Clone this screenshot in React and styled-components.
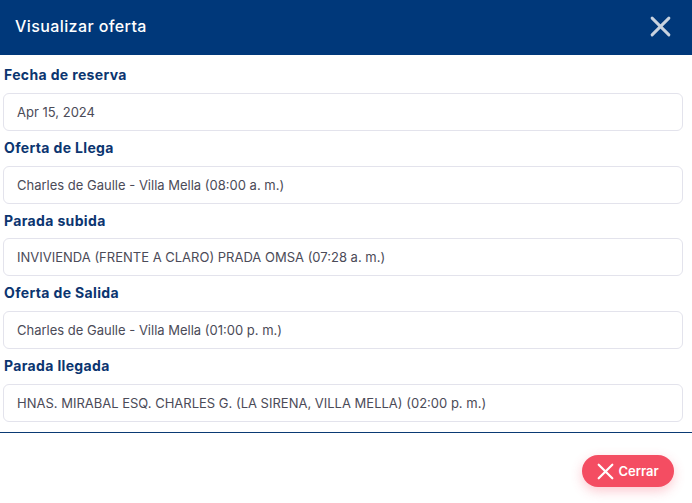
import styled, { createGlobalStyle } from "styled-components";

const GlobalStyle = createGlobalStyle`
  body {
    margin: 0;
    background: #fff;
    font-family: "Inter", "Open Sans", sans-serif;
  }
`;

const Wrapper = styled.div`
  width: 692px;
  height: 503px;
  background: #fff;
  display: flex;
  flex-direction: column;
`;

const Header = styled.div`
  height: 55px;
  background-color: #00387a;
  display: flex;
  align-items: center;
  justify-content: space-between;
  padding: 0 21px 0 15px;
  box-sizing: border-box;
`;

const Title = styled.h2`
  margin: 0;
  color: #fff;
  font-size: 16px;
  font-weight: 500;
  letter-spacing: 0.4px;
  padding-bottom: 3px;
`;

const CloseButton = styled.button`
  background: none;
  border: none;
  padding: 0;
  width: 21px;
  height: 21px;
  display: flex;
  cursor: pointer;
  margin-bottom: 3px;
`;

const Body = styled.div`
  padding: 3px 9px 0 3px;
`;

const Label = styled.div`
  padding: 7px 0 7px 1px;
  line-height: 20.75px;
  font-size: 14px;
  font-weight: 700;
  letter-spacing: 0.35px;
  color: #0b3570;
`;

const Field = styled.div`
  height: 38px;
  box-sizing: border-box;
  border: 1px solid #e3e3ec;
  border-radius: 6px;
  display: flex;
  align-items: center;
  padding: 0 13px;
  font-size: 13px;
  color: #4b4b58;
`;

const Divider = styled.div`
  margin-top: 10px;
  height: 1.5px;
  background: #0a3a74;
`;

const Footer = styled.div`
  display: flex;
  justify-content: flex-end;
  padding: 22px 18px 0 0;
`;

const Button = styled.button`
  height: 32px;
  width: 92px;
  border: none;
  border-radius: 16px;
  background: #f44d62;
  box-shadow: 0 4px 12px rgba(244, 77, 98, 0.3);
  color: #fff;
  font-family: inherit;
  font-size: 13px;
  font-weight: 600;
  display: flex;
  align-items: center;
  justify-content: center;
  gap: 4px;
  padding: 0;
  cursor: pointer;
`;

const fields = [
  { label: "Fecha de reserva", value: "Apr 15, 2024" },
  { label: "Oferta de Llega", value: "Charles de Gaulle - Villa Mella (08:00 a. m.)" },
  { label: "Parada subida", value: "INVIVIENDA (FRENTE A CLARO) PRADA OMSA (07:28 a. m.)" },
  { label: "Oferta de Salida", value: "Charles de Gaulle - Villa Mella (01:00 p. m.)" },
  {
    label: "Parada llegada",
    value: "HNAS. MIRABAL ESQ. CHARLES G. (LA SIRENA, VILLA MELLA) (02:00 p. m.)",
  },
];

const XIcon = ({ size, color, stroke }) => (
  <svg width={size} height={size} viewBox="0 0 20 20">
    <path
      d="M2 2 L18 18 M18 2 L2 18"
      stroke={color}
      strokeWidth={stroke}
      strokeLinecap="round"
    />
  </svg>
);

const App = () => {
  return (
    <Wrapper>
      <GlobalStyle />
      <Header>
        <Title>Visualizar oferta</Title>
        <CloseButton>
          <XIcon size={21} color="#c8d2df" stroke={2.8} />
        </CloseButton>
      </Header>

      <Body>
        {fields.map((f) => (
          <div key={f.label}>
            <Label>{f.label}</Label>
            <Field>{f.value}</Field>
          </div>
        ))}
      </Body>

      <Divider />

      <Footer>
        <Button>
          <XIcon size={17} color="#fff" stroke={2.6} />
          Cerrar
        </Button>
      </Footer>
    </Wrapper>
  );
};

export default App;
